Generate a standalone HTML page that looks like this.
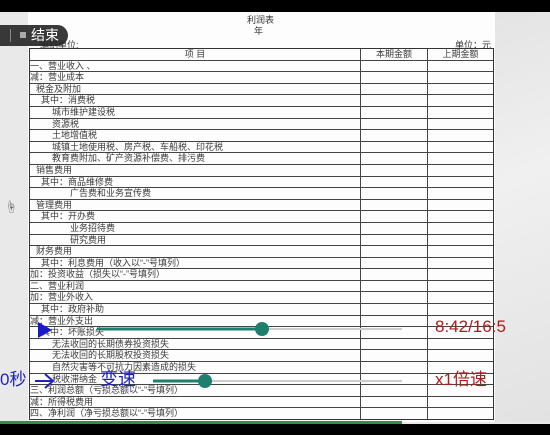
<!DOCTYPE html>
<html><head><meta charset="utf-8"><style>
*{margin:0;padding:0;box-sizing:border-box}
body{width:550px;height:435px;overflow:hidden;background:#e9e9e9;position:relative;font-family:"Liberation Sans","Noto Sans CJK SC",sans-serif}
.abs{position:absolute}
#paper{left:28px;top:12px;width:467px;height:410px;background:#fdfdfd}
#tbl{left:29px;top:48px;width:465px;height:372px;border:1px solid #333;border-top:1px solid #333;display:flex;flex-direction:column}
.r{flex:1;border-top:1px solid #444;display:flex;font-size:9px;color:#3a3a3a;line-height:10px;white-space:nowrap}
.r:first-child{border-top:none}
.c1{width:331px;border-right:1px solid #444;overflow:hidden}
.c2{width:67px;border-right:1px solid #444;text-align:center}
.c3{flex:1;text-align:center}
</style></head><body>
<div class="abs" style="left:0;top:0;width:550px;height:12px;background:#000"></div>
<div class="abs" style="left:495px;top:12px;width:55px;height:410px;background:linear-gradient(160deg,#e4e4e4,#f0f0f0 40%,#e2e2e2)"></div>
<div class="abs" id="paper"></div>
<div class="abs" style="left:247px;top:13px;font-size:9px;color:#333">利润表</div>
<div class="abs" style="left:254px;top:24px;font-size:9px;color:#333">年</div>
<div class="abs" style="left:455px;top:38px;font-size:9px;color:#333">单位：元</div>
<div class="abs" style="left:40px;top:38px;font-size:9px;color:#333">编制单位:</div>
<div class="abs" id="tbl">
<div class="r"><div class="c1" style="text-align:center">项 目</div><div class="c2">本期金额</div><div class="c3">上期金额</div></div>
<div class="r"><div class="c1">一、营业收入 、</div><div class="c2"></div><div class="c3"></div></div>
<div class="r"><div class="c1">减：营业成本</div><div class="c2"></div><div class="c3"></div></div>
<div class="r"><div class="c1" style="padding-left:6px">税金及附加</div><div class="c2"></div><div class="c3"></div></div>
<div class="r"><div class="c1" style="padding-left:11px">其中：消费税</div><div class="c2"></div><div class="c3"></div></div>
<div class="r"><div class="c1" style="padding-left:22px">城市维护建设税</div><div class="c2"></div><div class="c3"></div></div>
<div class="r"><div class="c1" style="padding-left:22px">资源税</div><div class="c2"></div><div class="c3"></div></div>
<div class="r"><div class="c1" style="padding-left:22px">土地增值税</div><div class="c2"></div><div class="c3"></div></div>
<div class="r"><div class="c1" style="padding-left:22px">城镇土地使用税、房产税、车船税、印花税</div><div class="c2"></div><div class="c3"></div></div>
<div class="r"><div class="c1" style="padding-left:22px">教育费附加、矿产资源补偿费、排污费</div><div class="c2"></div><div class="c3"></div></div>
<div class="r"><div class="c1" style="padding-left:6px">销售费用</div><div class="c2"></div><div class="c3"></div></div>
<div class="r"><div class="c1" style="padding-left:11px">其中：商品维修费</div><div class="c2"></div><div class="c3"></div></div>
<div class="r"><div class="c1" style="padding-left:40px">广告费和业务宣传费</div><div class="c2"></div><div class="c3"></div></div>
<div class="r"><div class="c1" style="padding-left:6px">管理费用</div><div class="c2"></div><div class="c3"></div></div>
<div class="r"><div class="c1" style="padding-left:11px">其中：开办费</div><div class="c2"></div><div class="c3"></div></div>
<div class="r"><div class="c1" style="padding-left:40px">业务招待费</div><div class="c2"></div><div class="c3"></div></div>
<div class="r"><div class="c1" style="padding-left:40px">研究费用</div><div class="c2"></div><div class="c3"></div></div>
<div class="r"><div class="c1" style="padding-left:6px">财务费用</div><div class="c2"></div><div class="c3"></div></div>
<div class="r"><div class="c1" style="padding-left:11px">其中：利息费用（收入以“-”号填列）</div><div class="c2"></div><div class="c3"></div></div>
<div class="r"><div class="c1">加：投资收益（损失以“-”号填列）</div><div class="c2"></div><div class="c3"></div></div>
<div class="r"><div class="c1">二、营业利润</div><div class="c2"></div><div class="c3"></div></div>
<div class="r"><div class="c1">加：营业外收入</div><div class="c2"></div><div class="c3"></div></div>
<div class="r"><div class="c1" style="padding-left:11px">其中：政府补助</div><div class="c2"></div><div class="c3"></div></div>
<div class="r"><div class="c1">减：营业外支出</div><div class="c2"></div><div class="c3"></div></div>
<div class="r"><div class="c1" style="padding-left:11px">其中：坏账损失</div><div class="c2"></div><div class="c3"></div></div>
<div class="r"><div class="c1" style="padding-left:22px">无法收回的长期债券投资损失</div><div class="c2"></div><div class="c3"></div></div>
<div class="r"><div class="c1" style="padding-left:22px">无法收回的长期股权投资损失</div><div class="c2"></div><div class="c3"></div></div>
<div class="r"><div class="c1" style="padding-left:22px">自然灾害等不可抗力因素造成的损失</div><div class="c2"></div><div class="c3"></div></div>
<div class="r"><div class="c1" style="padding-left:22px">税收滞纳金</div><div class="c2"></div><div class="c3"></div></div>
<div class="r"><div class="c1">三、利润总额（亏损总额以“-”号填列）</div><div class="c2"></div><div class="c3"></div></div>
<div class="r"><div class="c1">减：所得税费用</div><div class="c2"></div><div class="c3"></div></div>
<div class="r"><div class="c1">四、净利润（净亏损总额以“-”号填列）</div><div class="c2"></div><div class="c3"></div></div>
</div>
<div class="abs" style="left:0;top:421px;width:402px;height:3px;background:#3a8a4a"></div>
<div class="abs" style="left:0;top:424px;width:550px;height:11px;background:#000"></div>
<div class="abs" style="left:-14px;top:25px;width:82px;height:21px;border-radius:11px;background:rgba(40,40,40,.92)"></div>
<div class="abs" style="left:10px;top:29px;width:1px;height:13px;background:#888"></div>
<div class="abs" style="left:20px;top:32px;width:6px;height:6px;background:#aaa"></div>
<div class="abs" style="left:31px;top:27px;font-size:14px;color:#fff;line-height:17px">结束</div>
<div class="abs" style="left:5px;top:198px;font-size:12px;color:#555">☝</div>
<svg class="abs" style="left:0;top:0" width="550" height="435">
<line x1="97" y1="329" x2="262" y2="329" stroke="#1f7f6f" stroke-width="3"/>
<line x1="262" y1="329" x2="402" y2="329" stroke="#ccc" stroke-width="2"/>
<circle cx="262" cy="329" r="7" fill="#1f7f6f"/>
<polygon points="38,322 52,330 38,338" fill="#1a1acc"/>
<line x1="153" y1="381" x2="205" y2="381" stroke="#1f7f6f" stroke-width="3"/>
<line x1="205" y1="381" x2="402" y2="381" stroke="#ccc" stroke-width="2"/>
<circle cx="205" cy="381" r="7" fill="#1f7f6f"/>
<path d="M35 381 H52 M45 374 L53 381 L45 388" stroke="#2222bb" stroke-width="2" fill="none"/>
</svg>
<div class="abs" style="left:435px;top:317px;font-size:17px;color:#b01c1c;line-height:20px">8:42/16:5</div>
<div class="abs" style="left:435px;top:370px;font-size:17px;color:#b01c1c;line-height:20px">x1倍速</div>
<div class="abs" style="left:0;top:370px;font-size:17px;color:#2222bb;line-height:20px">0秒</div>
<div class="abs" style="left:100px;top:369px;font-size:18px;color:#2222bb;line-height:20px">变速</div>
</body></html>
